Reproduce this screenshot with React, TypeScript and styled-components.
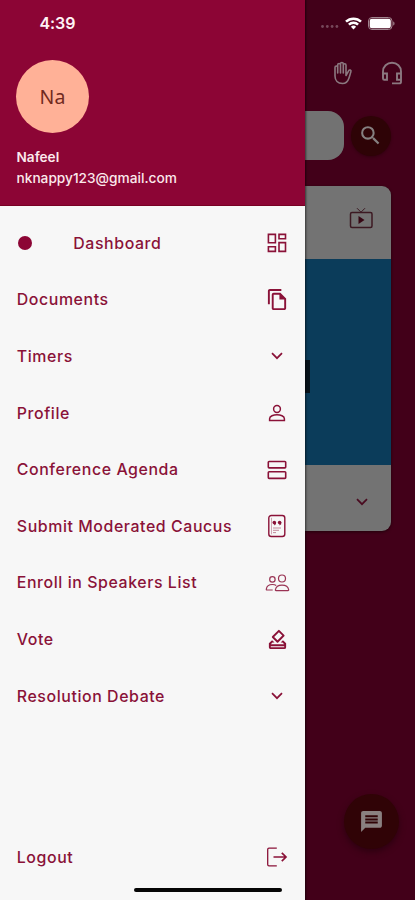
import React from "react";
import styled, { createGlobalStyle } from "styled-components";
import {
  MdOutlineFileCopy,
  MdOutlineHowToVote,
  MdSearch,
  MdMessage,
} from "react-icons/md";

const wine = "#8c0535";
const ink = "#8a1238";

const GlobalStyle = createGlobalStyle`
  * { box-sizing: border-box; }
  body { margin: 0; font-family: Inter, "Liberation Sans", sans-serif; }
  svg { display: block; flex: none; }
`;

const Screen = styled.div`
  display: flex;
  width: 415px;
  height: 900px;
  overflow: hidden;
  background: #420019;
`;

const Drawer = styled.aside`
  display: flex;
  flex-direction: column;
  width: 305px;
  height: 900px;
  flex: none;
  background: #f7f7f7;
  box-shadow: 0 0 2px 1px rgba(0, 0, 0, 0.55);
  z-index: 1;
`;

const Header = styled.header`
  height: 206px;
  padding: 13px 16px 0;
  background: ${wine};
  border-bottom: 1px solid #780023;
  color: #fbe9ec;
`;

const Clock = styled.div`
  padding-left: 23.5px;
  height: 20px;
  font-size: 16px;
  font-weight: 600;
  line-height: 20px;
  letter-spacing: -0.1px;
  color: #fff3f5;
`;

const Avatar = styled.div`
  display: grid;
  place-items: center;
  width: 73px;
  height: 73px;
  margin-top: 27px;
  border-radius: 50%;
  background: #ffb197;
  color: #702a20;
  font-family: "Noto Sans", sans-serif;
  font-size: 19.5px;
`;

const UserName = styled.div`
  margin-top: 15px;
  padding-left: 0.5px;
  height: 18px;
  font-size: 13.6px;
  font-weight: 600;
  line-height: 18px;
`;

const Email = styled.div`
  margin-top: 3px;
  padding-left: 0.5px;
  height: 18px;
  font-size: 13.7px;
  font-weight: 500;
  line-height: 18px;
`;

const Menu = styled.nav`
  display: flex;
  flex-direction: column;
  padding-top: 9px;
`;

const Row = styled.div`
  display: flex;
  align-items: center;
  height: 56.6px;
  padding: 0 16px;
  color: ${ink};
`;

const Label = styled.span`
  flex: 1;
  padding-left: 0.8px;
  white-space: nowrap;
  font-size: 15.9px;
  font-weight: 500;
  letter-spacing: 0.58px;
`;

const ActiveDot = styled.span`
  width: 14px;
  height: 14px;
  margin: 0 40.5px 0 2px;
  border-radius: 50%;
  background: ${wine};
`;

const IconSlot = styled.span`
  display: grid;
  place-items: center;
  width: 24px;
  height: 24px;
`;

const DrawerFooter = styled.footer`
  display: flex;
  flex-direction: column;
  height: 71px;
  margin-top: auto;
`;

const HomeIndicator = styled.div`
  width: 148px;
  height: 4px;
  margin: 2px 0 0 134px;
  border-radius: 2px;
  background: #050505;
`;

const Page = styled.main`
  display: flex;
  flex-direction: column;
  width: 110px;
  height: 900px;
  background: #420019;
`;

const StatusIcons = styled.div`
  display: flex;
  align-items: center;
  gap: 6px;
  height: 46px;
  padding-left: 15px;
`;

const SignalSlot = styled.span`
  padding-top: 7px;
`;

const Toolbar = styled.div`
  display: flex;
  align-items: center;
  gap: 26px;
  height: 54px;
  padding-left: 25.5px;
  color: #8b7880;
`;

const SearchRow = styled.div`
  display: flex;
  align-items: center;
  gap: 7px;
  height: 49px;
  margin-top: 11px;
`;

const SearchField = styled.div`
  width: 38.5px;
  height: 49px;
  border-radius: 0 16px 16px 0;
  background: #727272;
`;

const SearchButton = styled.div`
  display: grid;
  place-items: center;
  width: 40px;
  height: 40px;
  border-radius: 50%;
  background: #2e0306;
  box-shadow: 0 1px 3px rgba(30, 0, 5, 0.5);
  color: #858080;
`;

const Card = styled.section`
  width: 85.5px;
  height: 345px;
  margin-top: 26px;
  border-radius: 0 9px 9px 0;
  overflow: hidden;
  background: #737373;
  box-shadow: 0 1px 3px rgba(20, 0, 5, 0.7);
`;

const CardHead = styled.div`
  height: 73px;
  padding: 21px 0 0 44px;
`;

const CardMedia = styled.div`
  display: flex;
  height: 205.5px;
  padding-top: 101px;
  background: #0b3c5a;
`;

const MediaMark = styled.div`
  width: 4.5px;
  height: 33px;
  background: #08131b;
`;

const CardFoot = styled.div`
  display: flex;
  align-items: center;
  height: 66.5px;
  padding: 8px 0 0 51px;
  color: #4a0b20;
`;

const ChatButton = styled.div`
  display: grid;
  place-items: center;
  width: 55px;
  height: 55px;
  margin: auto 0 51px 38.5px;
  border-radius: 50%;
  background: #300306;
  box-shadow: 0 3px 6px rgba(40, 0, 14, 0.8);
  color: #8a8080;
`;

const Chevron = () => (
  <svg width="12" height="8" viewBox="0 0 12 8" fill="none" stroke="currentColor" strokeWidth="1.7">
    <path d="M1 1.2 6 6.2l5-5" />
  </svg>
);

const DashboardIcon = () => (
  <svg width="24" height="24" viewBox="0 0 24 24" fill="none" stroke="currentColor" strokeWidth="1.6">
    <path d="M3.4 3.4h7v8.4h-7zM14 3.4h6.5v4.4H14zM3.4 15.8h7v4.6h-7zM14 11.6h6.5v8.8H14z" />
  </svg>
);

const PersonIcon = () => (
  <svg width="24" height="24" viewBox="0 0 24 24" fill="none" stroke="currentColor" strokeWidth="1.5">
    <circle cx="12" cy="8" r="3.4" />
    <path d="M4.6 19.4v-1.6c0-2.700 3.900-4.100 7.400-4.100s7.400 1.400 7.400 4.100v1.600z" />
  </svg>
);

const AgendaIcon = () => (
  <svg width="24" height="24" viewBox="0 0 24 24" fill="none" stroke="currentColor" strokeWidth="1.6">
    <rect x="3.300" y="3.500" width="17.400" height="6.400" rx=".8" />
    <rect x="3.300" y="13.800" width="17.400" height="6.600" rx=".8" />
  </svg>
);

const CaucusIcon = () => (
  <svg width="24" height="24" viewBox="0 0 24 24" fill="none" stroke="currentColor">
    <rect x="3.8" y="1.5" width="16" height="21" rx="2.5" strokeWidth="1.4" />
    <path d="M6.5 3.8v16.5" strokeWidth=".7" opacity=".5" />
    <g fill="currentColor" stroke="none">
      <circle cx="9.3" cy="8.6" r="1.8" />
      <circle cx="14.6" cy="8.6" r="1.8" />
      <path d="M10.900 8v2.300L9 11.600l.4-1.600zM16.200 8v2.300l-1.900 1.300.4-1.600z" />
    </g>
    <path d="M8 14h8M8 16.300h6M8 18.600h3" strokeWidth=".8" opacity=".6" />
  </svg>
);

const SpeakersIcon = () => (
  <svg width="25" height="20" viewBox="0 0 25 20" fill="none" stroke="currentColor" strokeWidth="1.2" opacity=".85">
    <circle cx="17" cy="5.500" r="3.500" />
    <circle cx="7.400" cy="6.400" r="2.700" />
    <path d="M11 17.600c-.4 0-.7-.3-.6-.8.5-3 3.200-4.700 6.600-4.700s6.200 1.700 6.700 4.700c.1.500-.2.800-.7.800zM11.200 12.500c-1-.7-2.200-1-3.800-1-3.200 0-5.600 1.600-6.100 4.600-.1.600.2.900.7.900h5.700" />
  </svg>
);

const LogoutIcon = () => (
  <svg width="24" height="24" viewBox="0 0 24 24" fill="none" stroke="currentColor" strokeWidth="1.700">
    <path d="M11.800 3.200H4c-.8 0-1.300.5-1.300 1.300v15c0 .8.5 1.300 1.300 1.300h7.800" strokeWidth="1.300" />
    <path d="M8.500 12H21M16.800 7.800 21 12l-4.200 4.200" />
  </svg>
);

const WifiIcon = () => (
  <svg width="17" height="13" viewBox="0 0 17 13" fill="none" stroke="#fff" strokeWidth="2.500">
    <path d="M1 4.700a10.700 10.700 0 0 1 15 0M3.900 7.700a6.600 6.600 0 0 1 9.200 0" />
    <path d="m8.500 12.500-2.600-2.700a3.700 3.700 0 0 1 5.200 0z" fill="#fff" stroke="none" />
  </svg>
);

const BatteryIcon = () => (
  <svg width="27" height="13" viewBox="0 0 27 13">
    <rect x=".5" y=".5" width="23.500" height="12" rx="3.500" fill="none" stroke="#a1838e" />
    <rect x="1.700" y="1.700" width="21.100" height="9.600" rx="2.200" fill="#fff" />
    <path d="M25.200 4.400c1 .4 1.300 1.100 1.300 2.100s-.3 1.700-1.300 2.100z" fill="#a1838e" />
  </svg>
);

const SignalIcon = () => (
  <svg width="19" height="5" viewBox="0 0 19 5" fill="#76485a">
    <circle cx="2.500" cy="2.500" r="1.400" />
    <circle cx="7.300" cy="2.500" r="1.400" />
    <circle cx="12.100" cy="2.500" r="1.400" />
    <circle cx="16.900" cy="2.500" r="1.400" />
  </svg>
);

const HandIcon = () => (
  <svg width="24" height="24" viewBox="0 0 24 24" fill="none" stroke="currentColor" strokeWidth="1.600" strokeLinejoin="round" strokeLinecap="round">
    <path d="M4 15V6.500c0-2 2.700-2 2.700 0V12 4c0-2 2.800-2 2.800 0v8V2.800c0-1.800 2.800-1.800 2.800 0V12 4.300c0-2 2.700-2 2.700 0v10.200l2.600-4.700c.8-1.500 2.900-.8 2.300 1-.9 2.700-1.300 4.600-2.100 6.700-1.200 3.500-3.100 5-6.300 5C6.800 22.500 4 19.500 4 15z" />
  </svg>
);

const HeadsetIcon = () => (
  <svg width="22" height="24" viewBox="0 0 22 24" fill="none" stroke="currentColor" strokeWidth="1.900">
    <path d="M2 17v-6.500C2 5.500 6 1.700 11 1.700s9 3.800 9 8.800v10.200c0 1-.7 1.700-1.700 1.700H11" />
    <path d="M2 12.500h4v6.300H3.300c-.8 0-1.300-.5-1.300-1.300zM20 12.500h-4v6.300h4" />
  </svg>
);

const TvIcon = () => (
  <svg width="24" height="22" viewBox="0 0 24 22" fill="none" stroke="#3c1922" strokeWidth="1.500">
    <rect x="1.500" y="5.500" width="21.500" height="15" rx="1.500" />
    <path d="m8 1.200 4 4 4-4" strokeWidth="1" />
    <path d="m9.500 9 6 4-6 4z" fill="#360713" stroke="none" />
  </svg>
);

const items: { label: string; icon: React.ReactNode; active?: boolean }[] = [
  { label: "Dashboard", icon: <DashboardIcon />, active: true },
  { label: "Documents", icon: <MdOutlineFileCopy size={23} /> },
  { label: "Timers", icon: <Chevron /> },
  { label: "Profile", icon: <PersonIcon /> },
  { label: "Conference Agenda", icon: <AgendaIcon /> },
  { label: "Submit Moderated Caucus", icon: <CaucusIcon /> },
  { label: "Enroll in Speakers List", icon: <SpeakersIcon /> },
  { label: "Vote", icon: <MdOutlineHowToVote size={23} /> },
  { label: "Resolution Debate", icon: <Chevron /> },
];

export default function App() {
  return (
    <Screen>
      <GlobalStyle />
      <Drawer>
        <Header>
          <Clock>4:39</Clock>
          <Avatar>Na</Avatar>
          <UserName>Nafeel</UserName>
          <Email>nknappy123@gmail.com</Email>
        </Header>
        <Menu>
          {items.map((item) => (
            <Row key={item.label}>
              {item.active && <ActiveDot />}
              <Label>{item.label}</Label>
              <IconSlot>{item.icon}</IconSlot>
            </Row>
          ))}
        </Menu>
        <DrawerFooter>
          <Row>
            <Label>Logout</Label>
            <IconSlot><LogoutIcon /></IconSlot>
          </Row>
          <HomeIndicator />
        </DrawerFooter>
      </Drawer>
      <Page>
        <StatusIcons>
          <SignalSlot><SignalIcon /></SignalSlot>
          <WifiIcon />
          <BatteryIcon />
        </StatusIcons>
        <Toolbar>
          <HandIcon />
          <HeadsetIcon />
        </Toolbar>
        <SearchRow>
          <SearchField />
          <SearchButton><MdSearch size={25} /></SearchButton>
        </SearchRow>
        <Card>
          <CardHead><TvIcon /></CardHead>
          <CardMedia><MediaMark /></CardMedia>
          <CardFoot><Chevron /></CardFoot>
        </Card>
        <ChatButton><MdMessage size={25} /></ChatButton>
      </Page>
    </Screen>
  );
}
